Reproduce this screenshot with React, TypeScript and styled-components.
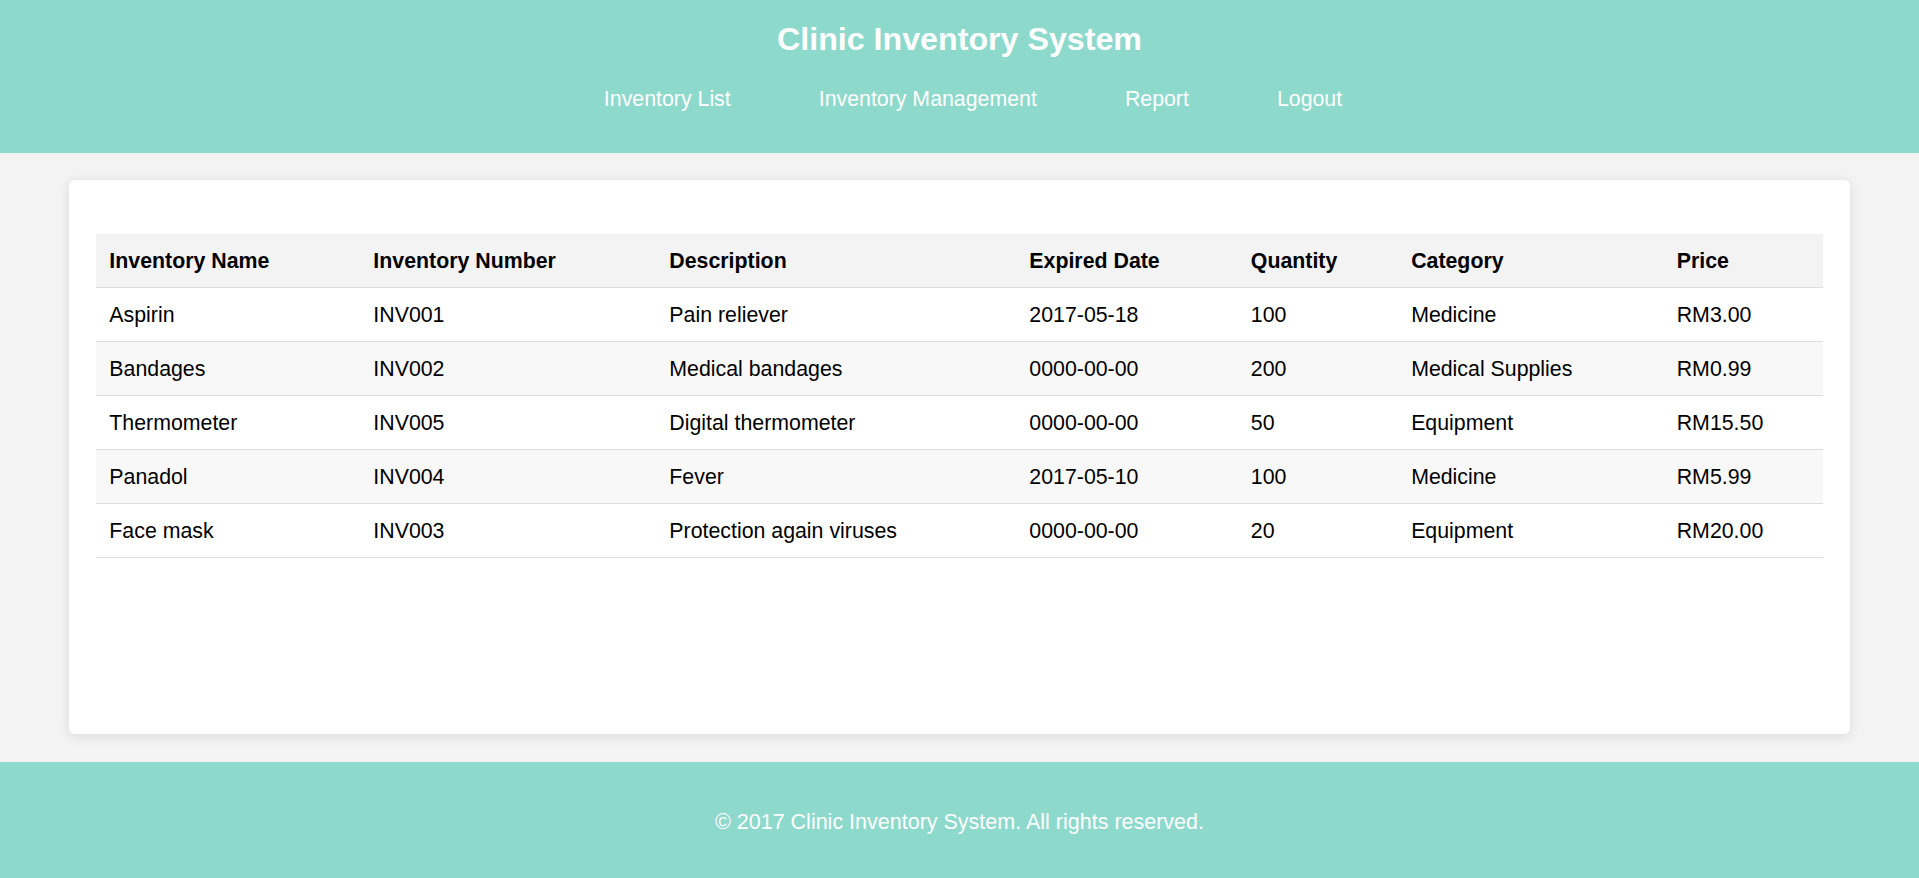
import React from "react";
import styled, { createGlobalStyle } from "styled-components";

const GlobalStyle = createGlobalStyle`
  html, body {
    margin: 0;
    padding: 0;
    background: #f3f3f3;
    font-family: "Liberation Sans", Arial, sans-serif;
  }
  * { box-sizing: border-box; }
`;

const Page = styled.div`
  display: flex;
  flex-direction: column;
  min-height: 878px;
  background: #f3f3f3;
`;

const Header = styled.header`
  background: #8dd9cc;
  padding: 21.4px 0 42.4px;
  display: flex;
  flex-direction: column;
  align-items: center;
`;

const Title = styled.h1`
  margin: 0;
  font-size: 32.2px;
  line-height: 37px;
  font-weight: 700;
  color: #ffffff;
`;

const Nav = styled.nav`
  margin-top: 28.2px;
  display: flex;
  justify-content: center;
  gap: 88px;
  padding-left: 27px;
`;

const NavLink = styled.a`
  color: #ffffff;
  text-decoration: none;
  font-size: 21.33px;
  line-height: 24px;
  cursor: pointer;
`;

const Main = styled.main`
  padding: 27px 69px 28px;
`;

const Card = styled.section`
  background: #ffffff;
  border-radius: 6px;
  box-shadow: 0 2px 12px rgba(0, 0, 0, 0.1);
  padding: 27px;
  min-height: 554px;
`;

const Table = styled.table`
  width: 100%;
  margin-top: 27.2px;
  border-collapse: collapse;
  table-layout: fixed;
`;

const HeadCell = styled.th`
  text-align: left;
  background: #f3f3f3;
  color: #000000;
  font-weight: 700;
  font-size: 21.33px;
  line-height: 24px;
  padding: 14.5px 13.33px;
  border-bottom: 1px solid #dddddd;
  white-space: nowrap;
`;

const Row = styled.tr<{ $striped: boolean }>`
  background: ${(p) => (p.$striped ? "#f8f8f8" : "#ffffff")};
`;

const Cell = styled.td`
  color: #000000;
  font-size: 21.33px;
  line-height: 24px;
  padding: 14.5px 13.33px;
  border-bottom: 1px solid #dddddd;
  white-space: nowrap;
`;

const Footer = styled.footer`
  background: #8dd9cc;
  padding: 48.5px 0 47px;
  text-align: center;
  color: #ffffff;
  font-size: 21.5px;
  line-height: 24px;
`;

const columns = [
  { label: "Inventory Name", width: 264 },
  { label: "Inventory Number", width: 296 },
  { label: "Description", width: 360 },
  { label: "Expired Date", width: 221.5 },
  { label: "Quantity", width: 160.3 },
  { label: "Category", width: 265.6 },
  { label: "Price", width: undefined as number | undefined },
];

const items = [
  ["Aspirin", "INV001", "Pain reliever", "2017-05-18", "100", "Medicine", "RM3.00"],
  ["Bandages", "INV002", "Medical bandages", "0000-00-00", "200", "Medical Supplies", "RM0.99"],
  ["Thermometer", "INV005", "Digital thermometer", "0000-00-00", "50", "Equipment", "RM15.50"],
  ["Panadol", "INV004", "Fever", "2017-05-10", "100", "Medicine", "RM5.99"],
  ["Face mask", "INV003", "Protection again viruses", "0000-00-00", "20", "Equipment", "RM20.00"],
];

export default function App() {
  return (
    <>
      <GlobalStyle />
      <Page>
        <Header>
          <Title>Clinic Inventory System</Title>
          <Nav>
            <NavLink>Inventory List</NavLink>
            <NavLink>Inventory Management</NavLink>
            <NavLink>Report</NavLink>
            <NavLink>Logout</NavLink>
          </Nav>
        </Header>
        <Main>
          <Card>
            <Table>
              <colgroup>
                {columns.map((c) => (
                  <col key={c.label} style={c.width ? { width: `${c.width}px` } : undefined} />
                ))}
              </colgroup>
              <thead>
                <tr>
                  {columns.map((c) => (
                    <HeadCell key={c.label}>{c.label}</HeadCell>
                  ))}
                </tr>
              </thead>
              <tbody>
                {items.map((row, i) => (
                  <Row key={row[1]} $striped={i % 2 === 1}>
                    {row.map((v, j) => (
                      <Cell key={j}>{v}</Cell>
                    ))}
                  </Row>
                ))}
              </tbody>
            </Table>
          </Card>
        </Main>
        <Footer>© 2017 Clinic Inventory System. All rights reserved.</Footer>
      </Page>
    </>
  );
}
